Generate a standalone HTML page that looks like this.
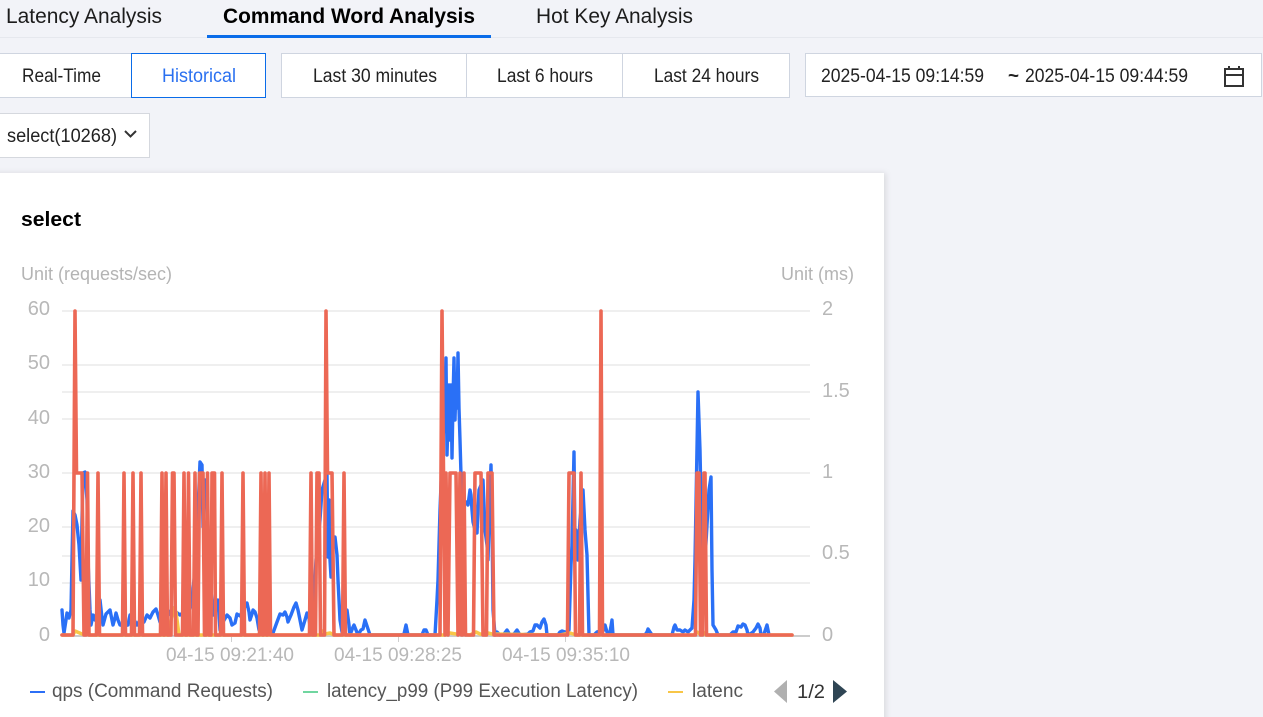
<!DOCTYPE html>
<html><head><meta charset="utf-8"><style>
html,body{margin:0;padding:0;background:#f2f3f8;width:1263px;height:717px;overflow:hidden}
svg{display:block;position:absolute;left:0;top:0}
text{font-family:"Liberation Sans",sans-serif}
</style></head><body>
<svg width="1263" height="717" viewBox="0 0 1263 717">
<defs>
<filter id="sh" x="-5%" y="-5%" width="110%" height="110%"><feDropShadow dx="2" dy="0" stdDeviation="3" flood-color="#000" flood-opacity=".1"/></filter>
<filter id="bl" x="40" y="290" width="780" height="360" filterUnits="userSpaceOnUse"><feGaussianBlur stdDeviation="0.35"/></filter>
<clipPath id="lg"><rect x="0" y="670" width="743" height="40"/></clipPath>
</defs>
<rect width="1263" height="717" fill="#f2f3f8"/>
<!-- tabs -->
<rect x="0" y="37" width="1263" height="1" fill="#e6e8ee"/>
<rect x="207" y="35" width="284" height="3" fill="#0a6ce9"/>
<g font-size="21" fill="#1c1c1c">
<text x="6" y="23" textLength="156" lengthAdjust="spacingAndGlyphs">Latency Analysis</text>
<text x="223" y="23" textLength="252" lengthAdjust="spacingAndGlyphs" font-weight="700" fill="#000">Command Word Analysis</text>
<text x="536" y="23" textLength="157" lengthAdjust="spacingAndGlyphs">Hot Key Analysis</text>
</g>
<!-- button groups -->
<rect x="-2" y="53.5" width="134" height="44" fill="#fff" stroke="#cfd5e0"/>
<rect x="131.5" y="53.5" width="134" height="44" fill="#fff" stroke="#0a6ce9"/>
<rect x="281.5" y="53.5" width="508" height="44" fill="#fff" stroke="#cfd5e0"/>
<rect x="466" y="54" width="1" height="43" fill="#cfd5e0"/>
<rect x="622" y="54" width="1" height="43" fill="#cfd5e0"/>
<rect x="805.5" y="53.5" width="456" height="43" fill="#fff" stroke="#cfd5e0"/>
<rect x="-2" y="113.5" width="151.5" height="44" fill="#fff" stroke="#d5d8de"/>
<g font-size="19" fill="#222">
<text x="22" y="82" textLength="79" lengthAdjust="spacingAndGlyphs">Real-Time</text>
<text x="162" y="82" textLength="74" lengthAdjust="spacingAndGlyphs" fill="#2a70f0">Historical</text>
<text x="313" y="82" textLength="124" lengthAdjust="spacingAndGlyphs">Last 30 minutes</text>
<text x="497" y="82" textLength="96" lengthAdjust="spacingAndGlyphs">Last 6 hours</text>
<text x="654" y="82" textLength="105" lengthAdjust="spacingAndGlyphs">Last 24 hours</text>
<text x="821" y="82" textLength="163" lengthAdjust="spacingAndGlyphs">2025-04-15 09:14:59</text>
<text x="1008" y="82" textLength="11" lengthAdjust="spacingAndGlyphs" font-weight="700">~</text>
<text x="1025" y="82" textLength="163" lengthAdjust="spacingAndGlyphs">2025-04-15 09:44:59</text>
<text x="7" y="142" textLength="110" lengthAdjust="spacingAndGlyphs">select(10268)</text>
</g>
<path d="M125 131l5.500 5.500 5.500-5.500" fill="none" stroke="#333" stroke-width="2"/>
<!-- calendar -->
<g fill="none" stroke="#333" stroke-width="2">
<rect x="1225" y="69" width="18" height="17"/>
<path d="M1225 75h18M1229 66v4M1239 66v4"/>
</g>
<!-- card -->
<rect x="-10" y="173" width="894" height="560" fill="#fff" filter="url(#sh)"/>
<text x="21" y="226" font-size="20" font-weight="700" fill="#000" textLength="60" lengthAdjust="spacingAndGlyphs">select</text>
<text x="21" y="280" font-size="18" fill="#b4b4b4" textLength="151" lengthAdjust="spacingAndGlyphs">Unit (requests/sec)</text>
<text x="781" y="280" font-size="18" fill="#b4b4b4" textLength="73" lengthAdjust="spacingAndGlyphs">Unit (ms)</text>
<!-- grid -->
<g fill="#efefef">
<rect x="62" y="310" width="748" height="2"/><rect x="62" y="364" width="748" height="2"/><rect x="62" y="391" width="748" height="2"/><rect x="62" y="418" width="748" height="2"/><rect x="62" y="472" width="748" height="2"/><rect x="62" y="526" width="748" height="2"/><rect x="62" y="555" width="748" height="2"/><rect x="62" y="582" width="748" height="2"/>
</g>
<rect x="62" y="635" width="748" height="2" fill="#cccccc"/>
<g fill="#cfcfcf"><rect x="231" y="637" width="1" height="5"/><rect x="398" y="637" width="1" height="5"/><rect x="565" y="637" width="1" height="5"/></g>
<!-- axes -->
<g font-size="20" fill="#b8b8b8">
<g text-anchor="end">
<text x="50" y="315">60</text><text x="50" y="369">50</text><text x="50" y="424">40</text><text x="50" y="478">30</text><text x="50" y="532">20</text><text x="50" y="586">10</text><text x="50" y="641">0</text>
</g>
<text x="822" y="315">2</text><text x="822" y="397">1.5</text><text x="822" y="478">1</text><text x="822" y="559">0.5</text><text x="822" y="641">0</text>
</g>
<g font-size="19" fill="#b8b8b8">
<text x="166" y="661" textLength="128" lengthAdjust="spacingAndGlyphs">04-15 09:21:40</text>
<text x="334" y="661" textLength="128" lengthAdjust="spacingAndGlyphs">04-15 09:28:25</text>
<text x="502" y="661" textLength="128" lengthAdjust="spacingAndGlyphs">04-15 09:35:10</text>
</g>
<!-- series -->
<g fill="none" stroke-linejoin="round" stroke-linecap="round" filter="url(#bl)">
<polyline stroke="#2c6ff6" stroke-width="3.400" points="62,610 63,625 64,633 66,620 67,613 69,618 71,610 72,560 73,511 75,515 77,525 79,545 81,580 82,520 83,473 85,472 87,500 88,560 90,610 91,625 93,615 95,620 97,612 99,616 100,600 102,618 103,625 106,614 110,610 112,620 113,625 115,618 116,613 118,620 120,625 124,626 128,625 130,615 133,618 137,625 140,620 144,622 147,615 150,618 153,612 156,609 158,615 160,622 164,620 168,615 171,610 173,608 176,612 180,615 184,612 188,618 192,600 195,570 198,510 200,462 202,465 203,527 205,480 207,500 209,560 211,590 213,615 216,610 218,600 220,630 223,622 227,615 230,618 232,625 235,623 237,614 240,616 243,610 247,603 249,612 250,620 252,614 253,610 255,612 257,618 259,630 263,632 267,632 270,633 273,633 277,622 280,614 283,615 285,612 287,617 288,622 291,615 294,607 296,603 298,610 302,630 305,620 307,613 309,618 311,635 314,600 316,560 318,540 320,520 322,490 325,480 327,475 328,557 329,500 330,560 331,577 333,545 335,537 337,555 338,580 340,620 342,632 345,620 347,610 349,625 350,635 353,627 354,625 356,630 358,635 361,630 363,629 365,620 367,626 370,635 400,635 404,634 406,625 408,635 422,635 424,630 426,630 428,635 435,635 437,600 438,580 440,510 442,460 444,420 446,358 447,455 448,420 449,385 450,440 451,385 452,458 453,400 454,358 455,420 456,385 457,408 458,353 459,408 460,440 461,475 463,500 466,502 468,505 470,490 471,495 472,510 473,522 475,530 477,533 478,510 479,490 481,485 483,480 485,530 487,545 488,560 490,490 491,465 492,520 493,610 495,635 497,632 500,635 504,634 507,630 510,635 514,634 517,630 520,635 528,634 530,632 533,631 535,625 537,625 540,628 542,622 544,619 546,625 547,635 558,635 560,632 562,631 565,632 567,632 569,630 571,565 572,545 574,452 575,545 576,530 578,560 580,520 583,490 585,530 587,555 589,635 594,635 597,632 600,631 604,630 605,625 607,632 608,635 610,632 612,620 613,635 645,635 647,632 648,629 650,632 652,635 672,635 674,627 675,625 677,630 680,630 683,632 685,630 688,632 692,628 694,600 695,560 698,392 700,450 701,500 702,530 703,567 705,560 707,525 709,490 711,477 712,570 713,625 716,630 718,635 730,635 733,632 736,632 738,626 741,627 743,624 745,625 747,630 748,635 750,634 753,632 756,628 758,624 760,628 761,635 764,634 766,628 767,625 769,635"/>
<polyline stroke="#f8c647" stroke-width="3.500" points="62,635 73,635 75,631 82,634 90,635 168,635 172,615 173,608 176,612 179,635 320,635 322,631 325,634 330,633 334,635 445,635 450,633 456,634 470,635 476,632 480,634 486,635 488,633 492,634 560,635 570,633 576,635 694,635 697,632 700,634 703,632 706,635 792,635"/>
<polyline stroke="#ec6754" stroke-width="3.600" points="62,635 73,635 75,311 76.500,473 82,473 84,635 86,635 87.500,473 89,635 96.500,635 98,473 99.500,635 122.500,635 124,473 125.500,635 131.500,635 133,473 134.500,635 139.500,635 141,473 142.500,635 160.500,635 162,473 163.500,635 164.500,635 166,473 167.500,635 171,635 172.500,473 174,473 175.500,635 182.500,635 184,473 185.500,635 187,635 188.500,473 190,635 193.500,635 195,473 196.500,635 198,635 199.500,473 203,473 204.500,635 206,635 207.500,473 209,635 211,635 212,473 214.500,473 215.500,635 220.500,635 222,473 223.500,635 241.500,635 243,473 244.500,635 259.500,635 261,473 262.500,635 263.500,635 265,473 266.500,635 267.500,635 269,473 270.500,635 309.500,635 311,473 312.500,635 315.500,635 317,473 319,473 320.500,635 324.500,635 326,311 327.500,473 332,473 334,635 342.500,635 344,473 345.500,635 440,635 442,311 443.500,473 445,635 446,473 448,635 450,473 456,473 458,635 460,473 461.500,635 462.500,635 464,473 465.500,635 473.500,635 475,473 481,473 483,635 486.500,635 488,473 492,473 494,635 567.500,635 569,473 574,473 575.500,635 579.500,635 581,473 582.500,635 599.500,635 601,311 602.500,635 695.500,635 697,473 699,473 700.500,635 702.500,635 704,473 705,473 706.500,635 792,635"/>
</g>
<!-- legend -->
<rect x="30" y="691" width="15" height="2" fill="#2c6ff6"/>
<rect x="303" y="691" width="15" height="2" fill="#70d6a0"/>
<rect x="668" y="691" width="15" height="2" fill="#f8c647"/>
<g font-size="19" fill="#555">
<text x="52" y="697" textLength="221" lengthAdjust="spacingAndGlyphs">qps (Command Requests)</text>
<text x="327" y="697" textLength="311" lengthAdjust="spacingAndGlyphs">latency_p99 (P99 Execution Latency)</text>
<text x="692" y="697" textLength="51" lengthAdjust="spacingAndGlyphs" clip-path="url(#lg)">latenc</text>
<text x="797" y="698" textLength="28" lengthAdjust="spacingAndGlyphs" fill="#333">1/2</text>
</g>
<path d="M787 680v23l-13-11.500z" fill="#b0b0b0"/>
<path d="M833 680v23l14-11.500z" fill="#2f4554"/>
</svg>
</body></html>
